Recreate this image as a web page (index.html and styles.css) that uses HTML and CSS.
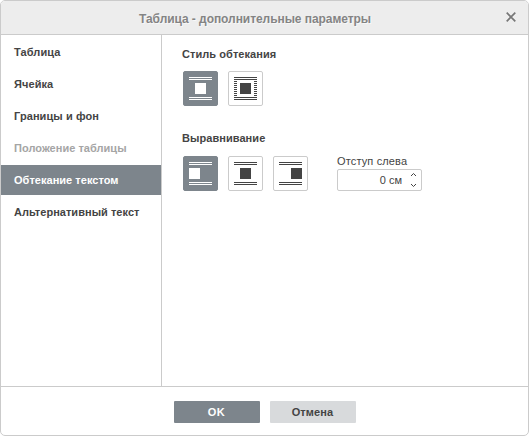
FILE: index.html
```html
<!DOCTYPE html>
<html lang="ru">
<head>
<meta charset="utf-8">
<title>Таблица - дополнительные параметры</title>
<link rel="stylesheet" href="styles.css">
</head>
<body>
<div class="dialog">
  <header class="header">
    <h1 class="title">Таблица - дополнительные параметры</h1>
    <svg class="close" width="10" height="10" viewBox="0 0 10 10"><path d="M.7 .7L9.3 9.3M9.3 .7L.7 9.3"/></svg>
  </header>
  <main class="body">
    <nav class="menu">
      <a class="item short">Таблица</a>
      <a class="item short">Ячейка</a>
      <a class="item short">Границы и фон</a>
      <a class="item disabled">Положение таблицы</a>
      <a class="item active">Обтекание текстом</a>
      <a class="item">Альтернативный текст</a>
    </nav>
    <section class="panel">
      <h2 class="label">Стиль обтекания</h2>
      <div class="row">
        <button class="tile on"><svg width="23" height="23"><path d="M0 0h23v1H0zM0 2h23v1H0zM6 6h11v11H6zM0 20h23v1H0zM0 22h23v1H0z"/></svg></button>
        <button class="tile"><svg width="23" height="23"><path d="M0 0h23v1H0zM0 2h23v1H0zM6 6h11v11H6zM0 20h23v1H0zM0 22h23v1H0z"/><path d="M0 4h3v1H0zM0 6h3v1H0zM0 8h3v1H0zM0 10h3v1H0zM0 12h3v1H0zM0 14h3v1H0zM0 16h3v1H0zM0 18h3v1H0zM20 4h3v1h-3zM20 6h3v1h-3zM20 8h3v1h-3zM20 10h3v1h-3zM20 12h3v1h-3zM20 14h3v1h-3zM20 16h3v1h-3zM20 18h3v1h-3z"/></svg></button>
      </div>
      <h2 class="label second">Выравнивание</h2>
      <div class="row lower">
        <button class="tile on"><svg width="23" height="23"><path d="M0 0h23v1H0zM0 2h23v1H0zM0 6h11v11H0zM0 20h23v1H0zM0 22h23v1H0z"/></svg></button>
        <button class="tile"><svg width="23" height="23"><path d="M0 0h23v1H0zM0 2h23v1H0zM6 6h11v11H6zM0 20h23v1H0zM0 22h23v1H0z"/></svg></button>
        <button class="tile"><svg width="23" height="23"><path d="M0 0h23v1H0zM0 2h23v1H0zM12 6h11v11H12zM0 20h23v1H0zM0 22h23v1H0z"/></svg></button>
        <div class="field">
          <span class="caption">Отступ слева</span>
          <div class="spinner">
            <span class="value">0 см</span>
            <svg class="arrows" width="5" height="14" viewBox="0 0 5 14"><path d="M0 3L2.5 .5L5 3M0 11L2.5 13.5L5 11"/></svg>
          </div>
        </div>
      </div>
    </section>
  </main>
  <footer class="footer">
    <button class="btn primary">OK</button>
    <button class="btn">Отмена</button>
  </footer>
</div>
</body>
</html>
```
FILE: styles.css
```css
* { box-sizing: border-box; }
body { margin: 0; background: #fff; font: 11px/14px "Liberation Sans", Arial, sans-serif; color: #444; }
h1, h2 { margin: 0; font-size: inherit; }
button { border: 0; padding: 0; font: inherit; }
svg { display: block; }
.dialog { width: 529px; height: 436px; border: 1px solid #cbcbcb; border-radius: 5px; overflow: hidden; display: flex; flex-direction: column; }
.header { height: 34px; flex: none; display: flex; align-items: center; background: #ededed; border-bottom: 1px solid #cbcbcb; padding: 0 12px 0 138px; }
.title { flex: 1; font-size: 12px; line-height: 16px; padding-top: 3px; color: #848484; letter-spacing: -.06px; text-shadow: 1px 1px 0 #f8f8f8; white-space: nowrap; }
.close { fill: none; stroke: #777; stroke-width: 1.7; margin-bottom: 1px; }
.body { flex: 1; display: flex; }
.menu { width: 161px; border-right: 1px solid #cbcbcb; padding-top: 2px; display: flex; flex-direction: column; gap: 2px; }
.item { height: 30px; line-height: 30px; padding-left: 13px; font-weight: bold; white-space: nowrap; letter-spacing: .03px; }
.short { letter-spacing: .08px; }
.disabled { color: #a5a5a5; }
.active { background: #7d858c; color: #fff; }
.panel { padding: 12px 0 0 20px; }
.label { letter-spacing: .06px; }
.second { margin-top: 25px; }
.row { display: flex; gap: 10px; margin: 10px 0 0 1px; height: 35px; }
.row.lower { margin-top: 11px; }
.tile { width: 35px; height: 35px; flex: none; border: 1px solid #cbcbcb; border-radius: 2px; background: #fff; display: flex; align-items: center; justify-content: center; fill: #444; }
.tile.on { background: #7d858c; border-color: #7d858c; fill: #fff; }
.field { margin: -2px 0 0 19px; }
.caption { display: block; height: 15px; letter-spacing: .14px; }
.spinner { width: 85px; height: 22px; border: 1px solid #cbcbcb; border-radius: 2px; display: flex; align-items: center; justify-content: flex-end; gap: 9px; padding-right: 5px; }
.arrows { fill: none; stroke: #444; stroke-width: 1; }
.footer { height: 49px; flex: none; border-top: 1px solid #cbcbcb; display: flex; justify-content: center; gap: 10px; padding: 14px 0 0; }
.btn { width: 86px; height: 22px; border-radius: 1px; background: #d8dadc; color: #444; font-weight: bold; letter-spacing: .1px; }
.btn.primary { background: #7d858c; color: #fff; letter-spacing: .4px; }
```
